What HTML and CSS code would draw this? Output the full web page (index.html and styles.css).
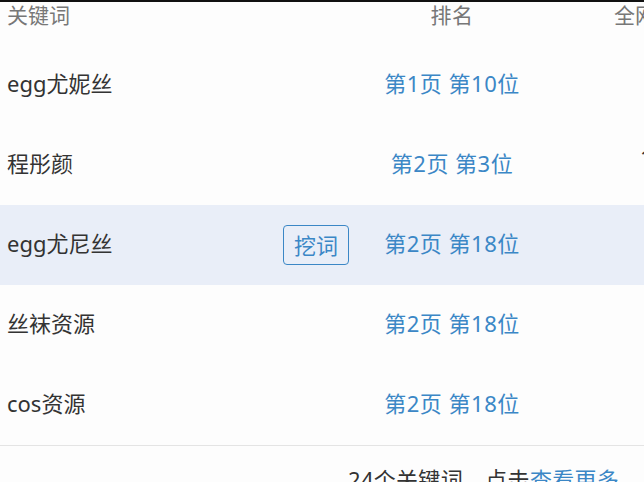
FILE: index.html
```html
<!DOCTYPE html>
<html lang="zh-CN">
<head>
    <meta charset="UTF-8">
    <meta name="viewport" content="width=device-width, initial-scale=1.0">
    <title>关键词排名</title>
    <link rel="stylesheet" href="styles.css">
</head>
<body>
    <div class="top-band"></div>
    <div class="rank-table">
        <div class="row head">
            <div class="cell kw">关键词</div>
            <div class="cell rank">排名</div>
            <div class="cell all">全网排名</div>
        </div>
        <div class="row">
            <div class="cell kw">egg尤妮丝</div>
            <div class="cell rank link">第1页 第10位</div>
            <div class="cell all"></div>
        </div>
        <div class="row">
            <div class="cell kw">程彤颜</div>
            <div class="cell rank link">第2页 第3位</div>
            <div class="cell all">1</div>
        </div>
        <div class="row active">
            <div class="cell kw">egg尤尼丝 <button class="dig">挖词</button></div>
            <div class="cell rank link">第2页 第18位</div>
            <div class="cell all"></div>
        </div>
        <div class="row">
            <div class="cell kw">丝袜资源</div>
            <div class="cell rank link">第2页 第18位</div>
            <div class="cell all"></div>
        </div>
        <div class="row">
            <div class="cell kw">cos资源</div>
            <div class="cell rank link">第2页 第18位</div>
            <div class="cell all"></div>
        </div>
    </div>
    <div class="footer">24个关键词，点击<span class="more">查看更多</span></div>
</body>
</html>
```
FILE: styles.css
```css
body {
    margin: 0;
    width: 644px;
    height: 482px;
    overflow: hidden;
    background: #fdfdfd;
    font-family: "Noto Sans", "Noto Sans CJK SC", sans-serif;
    color: #333;
}
.top-band {
    height: 2px;
    background: #111;
}
.rank-table {
    border-bottom: 1px solid #e4e4e4;
}
.row {
    display: grid;
    grid-template-columns: 372px 160px 1fr;
    height: 80px;
    align-items: center;
    font-size: 22px;
    line-height: 30px;
    white-space: nowrap;
    overflow: hidden;
}
.row > .cell {
    margin-top: -4px;
}
.row.head {
    height: 43px;
    align-items: start;
    font-size: 21px;
    color: #777;
    line-height: 26px;
}
.row.head > .cell {
    margin-top: 0;
}
.row.active {
    background: #e9eef8;
}
.cell.kw {
    display: flex;
    align-items: center;
    padding: 0 23px 0 7px;
}
.cell.rank {
    text-align: center;
    letter-spacing: 0.5px;
}
.cell.all {
    padding-left: 82px;
}
.row:not(.head) .cell.all {
    padding-left: 108px;
    margin-top: -16px;
}
.link {
    color: #3b87c6;
}
.dig {
    margin: 4px 0 0 auto;
    width: 66px;
    height: 40px;
    padding: 0;
    border: 1px solid #3b87c6;
    border-radius: 4px;
    background: transparent;
    color: #3b87c6;
    font-family: inherit;
    font-size: 22px;
    line-height: 36px;
}
.footer {
    padding: 16px 0 0 348px;
    font-size: 22px;
    letter-spacing: 0.3px;
    color: #333;
    white-space: nowrap;
}
.more {
    color: #3b87c6;
}
```
